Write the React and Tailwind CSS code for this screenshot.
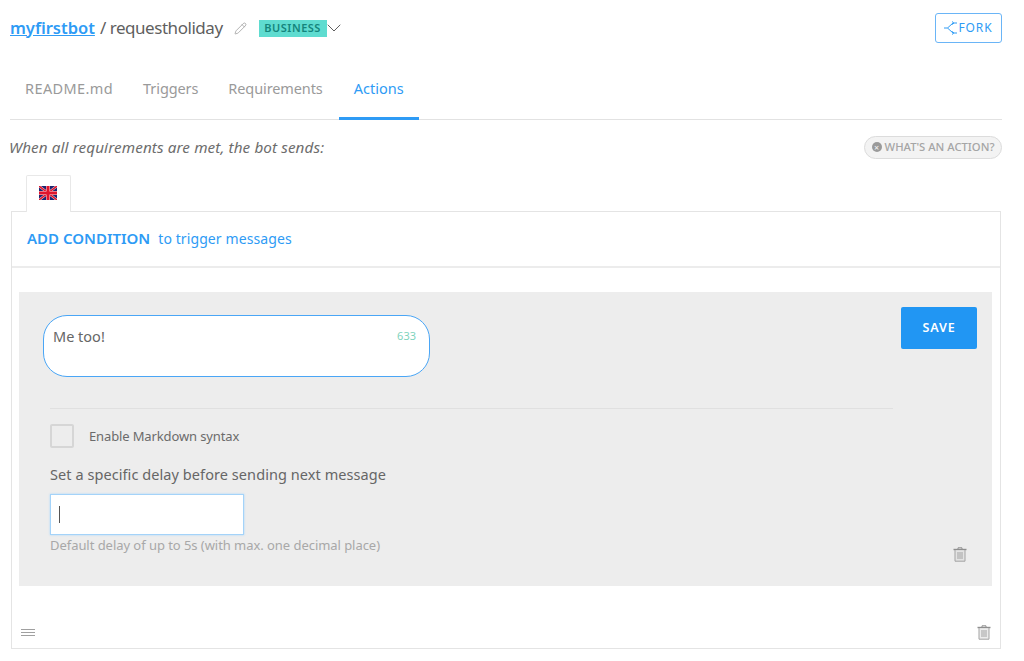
import React from "react";
import { ChevronDown, Pencil } from "lucide-react";

const Trash = ({ className }) => (
  <svg viewBox="0 0 14 15" width="14" height="15" className={className} fill="none">
    <path d="M0.5 2.5h13" stroke="#8f8f8f" strokeWidth="1.4" />
    <path d="M5 2V0.8h4V2" stroke="#8f8f8f" strokeWidth="1" />
    <path d="M2 3v11.2h10V3" stroke="#a3a3a3" strokeWidth="1" fill="#d9d9d9" fillOpacity="0.5" />
    <path d="M5 5v7M7 5v7M9 5v7" stroke="#a3a3a3" strokeWidth="1" />
  </svg>
);

const ForkIcon = () => (
  <svg viewBox="0 0 14 14" width="14" height="14" fill="none" stroke="#2e9bf5" strokeWidth="1">
    <path d="M0 7h3.5L9 2h4M3.5 7 9 12h4" />
    <path d="M8 0.5 9.8 2 8 3.8M8 10.2 9.8 12 8 13.5" />
  </svg>
);

const Flag = () => (
  <svg viewBox="0 0 18 14" width="18" height="14">
    <rect width="18" height="14" fill="#1b2470" />
    <path d="M0 0 18 14M18 0 0 14" stroke="#f1d5da" strokeWidth="2.4" />
    <path d="M0 0 18 14M18 0 0 14" stroke="#e0142c" strokeWidth="1.4" />
    <path d="M9 0v14M0 7h18" stroke="#f4dde0" strokeWidth="4" />
    <path d="M9 0v14M0 7h18" stroke="#e0142c" strokeWidth="3" />
  </svg>
);

export default function App() {
  return (
    <div className="h-[661px] w-[1024px] overflow-hidden bg-white font-['Noto_Sans',sans-serif] text-[#5b5b5b]">
      <div className="ml-[10px] w-[992px]">
        {/* header */}
        <div className="flex h-[70px] items-start justify-between pt-[13px]">
          <div className="flex h-[30px] items-center">
            <a className="text-[16.5px] font-semibold text-[#2e9bf5] underline">myfirstbot</a>
            <span className="ml-[5px] text-[17px] tracking-[-0.46px] text-[#5f5f5f]">/ requestholiday</span>
            <Pencil size={13} strokeWidth={1.25} className="ml-[11px] text-[#8e8e8e]" />
            <span className="ml-[12px] flex h-[17px] w-[68px] items-center justify-center bg-[#5fdcd0] text-[11px] font-semibold tracking-[0.5px] text-[#14857c]">
              BUSINESS
            </span>
            <ChevronDown size={24} strokeWidth={1} className="-ml-[5px] text-[#5f5f5f]" />
          </div>
          <button className="flex h-[30px] w-[67px] items-center justify-center rounded-[3px] border border-[#6ab5f7] text-[12px] tracking-[0.9px] text-[#2e9bf5]">
            <ForkIcon />
            FORK
          </button>
        </div>

        {/* tabs */}
        <div className="flex h-[50px] items-stretch border-b border-[#e2e2e2] text-[14.5px] text-[#9a9a9a]">
          <div className="flex items-center px-[15px] pb-[12px] tracking-[0.4px]">README.md</div>
          <div className="flex items-center px-[15px] pb-[12px] tracking-[-0.1px]">Triggers</div>
          <div className="flex items-center px-[15px] pb-[12px] tracking-[-0.1px]">Requirements</div>
          <div className="-mb-px ml-px flex w-[80px] items-center justify-center border-b-[3px] border-[#2e9bf5] pb-[9px] text-[#2e9bf5]">Actions</div>
        </div>

        <div className="flex h-[55px] items-center justify-between">
          <p className="-ml-px text-[15.25px] italic tracking-[0.1px] text-[#6d6d6d]">When all requirements are met, the bot sends:</p>
          <div className="flex h-[23px] w-[138px] items-center justify-center gap-[3px] rounded-full border border-[#dcdcdc] bg-[#f3f3f3] pb-px text-[11.25px] font-medium text-[#a5a5a5]">
            <span className="flex h-[10px] w-[10px] items-center justify-center rounded-full bg-[#9a9a9a] text-[9px] leading-none text-[#f3f3f3]">×</span>
            WHAT'S AN ACTION?
          </div>
        </div>

        {/* language tab */}
        <div className="relative z-10 -mb-px ml-[16px] flex h-[37px] w-[45px] items-center justify-center rounded-t-[2px] border border-b-0 border-[#e8e8e8] bg-white pr-px pb-[3px]">
          <Flag />
        </div>

        {/* card */}
        <div className="ml-[1px] h-[438px] w-[990px] border border-[#e4e4e4]">
          <div className="flex h-[56px] items-center gap-[8px] border-b-2 border-[#ececec] pb-[2px] pl-[15px] text-[#2e9bf5]">
            <span className="text-[15px] font-semibold">ADD CONDITION</span>
            <span className="text-[14px] tracking-[0.1px]">to trigger messages</span>
          </div>

          <div className="ml-[7px] mt-[24px] flex h-[294px] w-[973px] bg-[#ededed] pt-[15px]">
            <div className="ml-[31px] flex w-[843px] flex-col">
              <div className="-ml-[7px] mt-[8px] flex h-[62px] w-[387px] items-start justify-between rounded-[24px] border border-[#4aa6f6] bg-white pl-[9px] pr-[10px] pt-[10px]">
                <span className="text-[14.5px] text-[#666]">Me too!</span>
                <span className="mr-[3px] mt-[2px] text-[11px] text-[#7fd3bd]">633</span>
              </div>
              <div className="mt-[31px] border-t border-[#e0e0e0]"></div>
              <div className="mt-[15px] flex items-center">
                <span className="h-[24px] w-[24px] rounded-[2px] border-2 border-[#d6d6d6]"></span>
                <span className="ml-[15px] pt-px text-[13px] tracking-[-0.13px] text-[#6b6b6b]">Enable Markdown syntax</span>
              </div>
              <div className="mt-[16px] text-[14.5px] leading-[20px] tracking-[0.07px] text-[#666]">Set a specific delay before sending next message</div>
              <div className="mt-[10px] flex h-[41px] w-[194px] items-center border border-[#a4d3f9] bg-white pl-[8px] shadow-[0_0_2px_#a9d6fa]">
                <span className="h-[17px] w-px bg-[#555]"></span>
              </div>
              <div className="mt-[2px] text-[13px] leading-[16px] tracking-[-0.05px] text-[#a8a8a8]">Default delay of up to 5s (with max. one decimal place)</div>
            </div>
            <div className="ml-[8px] flex w-[76px] flex-col items-center justify-between pb-[24px]">
              <button className="h-[42px] w-[76px] rounded-[2px] bg-[#2196f3] text-[12.5px] font-semibold tracking-[0.8px] text-white">SAVE</button>
              <Trash className="mr-[10px] self-end" />
            </div>
          </div>

          <div className="flex items-center justify-between pl-[9px] pr-[9px] pt-[39px]">
            <svg viewBox="0 0 14 8" width="14" height="8" stroke="#a0a0a0" strokeWidth="1">
              <path d="M0 .5h14M0 3.5h14M0 6.5h14" />
            </svg>
            <Trash />
          </div>
        </div>
      </div>
    </div>
  );
}
